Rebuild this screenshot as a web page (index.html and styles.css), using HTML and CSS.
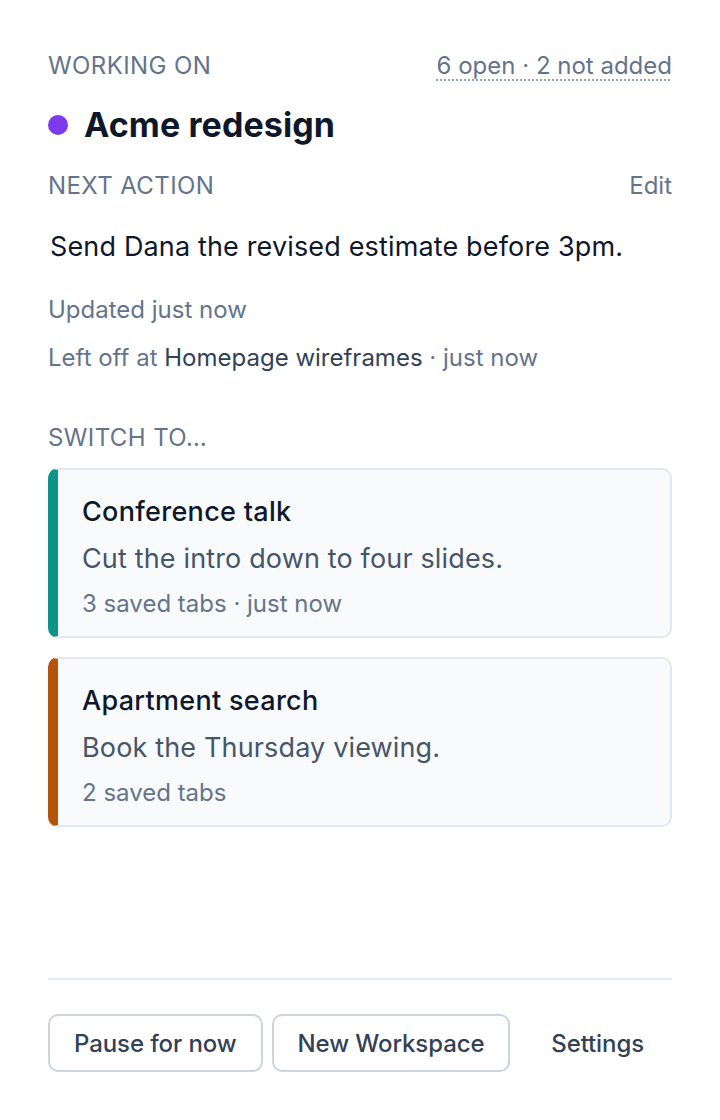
FILE: index.html
```html
<!DOCTYPE html>
<html lang="en">
<head>
    <meta charset="UTF-8">
    <meta name="viewport" content="width=device-width, initial-scale=1.0">
    <title>Workspaces</title>
    <link rel="stylesheet" href="styles.css">
</head>
<body>
    <div class="popup">
        <div class="row">
            <span class="label">Working on</span>
            <span class="tab-count">6 open · 2 not added</span>
        </div>
        <h1 class="current">
            <span class="dot"></span>
            Acme redesign
        </h1>

        <div class="row next-row">
            <span class="label">Next action</span>
            <a class="edit" href="#">Edit</a>
        </div>
        <p class="next-action">Send Dana the revised estimate before 3pm.</p>
        <p class="meta updated">Updated just now</p>
        <p class="meta left-off">Left off at <span class="page">Homepage wireframes</span> · just now</p>

        <div class="label switch-label">Switch to…</div>
        <div class="cards">
            <div class="card teal">
                <div class="card-title">Conference talk</div>
                <div class="card-action">Cut the intro down to four slides.</div>
                <div class="card-meta">3 saved tabs · just now</div>
            </div>
            <div class="card orange">
                <div class="card-title">Apartment search</div>
                <div class="card-action">Book the Thursday viewing.</div>
                <div class="card-meta">2 saved tabs</div>
            </div>
        </div>

        <div class="footer">
            <button type="button" class="btn">Pause for now</button>
            <button type="button" class="btn">New Workspace</button>
            <button type="button" class="btn plain">Settings</button>
        </div>
    </div>
</body>
</html>
```

FILE: styles.css
```css
* {
    box-sizing: border-box;
}

body {
    font-family: Inter, "Noto Sans", sans-serif;
    background-color: #FFFFFF;
    color: #0F172A;
    margin: 0;
}

.popup {
    min-height: 100vh;
    padding: 49px 48px 48px;
    display: flex;
    flex-direction: column;
}

.row {
    display: flex;
    justify-content: space-between;
    align-items: center;
    line-height: 33px;
}

.label {
    font-size: 24px;
    color: #64748B;
    text-transform: uppercase;
    letter-spacing: 0.4px;
}

.tab-count {
    font-size: 24px;
    color: #64748B;
    text-decoration: underline dotted #94A3B8;
    text-decoration-thickness: 2px;
    text-underline-offset: 5px;
}

.current {
    display: flex;
    align-items: center;
    gap: 16px;
    margin: 21px 0 0;
    font-size: 34px;
    line-height: 44px;
    font-weight: 700;
    letter-spacing: 0.1px;
}

.dot {
    width: 20px;
    height: 20px;
    border-radius: 50%;
    background: #7C3AED;
}

.next-row {
    margin-top: 22px;
}

.edit {
    font-size: 24px;
    color: #64748B;
    text-decoration: none;
}

.next-action {
    margin: 25px 0 0;
    padding-left: 2px;
    font-size: 27px;
    line-height: 39px;
    letter-spacing: 0.15px;
    color: #0F172A;
}

.meta {
    margin: 0;
    font-size: 24px;
    line-height: 33px;
    color: #64748B;
}

.updated {
    margin-top: 27px;
}

.left-off {
    margin-top: 15px;
}

.page {
    color: #334155;
}

.switch-label {
    margin-top: 47px;
    line-height: 33px;
}

.cards {
    display: flex;
    flex-direction: column;
    gap: 19px;
    margin-top: 14px;
}

.card {
    background: #F8FAFC;
    border: 2px solid #E2E8F0;
    border-left: 10px solid #0D9488;
    border-radius: 10px;
    padding: 24px 24px 16px;
}

.card.orange {
    border-left-color: #B45309;
}

.card-title {
    font-size: 27px;
    line-height: 36px;
    font-weight: 500;
    letter-spacing: 0.3px;
    color: #0F172A;
}

.card-action {
    margin-top: 11px;
    font-size: 27px;
    line-height: 36px;
    letter-spacing: 0.15px;
    color: #475569;
}

.card-meta {
    margin-top: 10px;
    font-size: 24px;
    line-height: 33px;
    color: #64748B;
}

.footer {
    margin-top: auto;
    border-top: 2px solid #E2E8F0;
    padding-top: 34px;
    display: flex;
    gap: 9px;
}

.btn {
    font-family: inherit;
    font-size: 24px;
    font-weight: 500;
    color: #334155;
    background: #FFFFFF;
    border: 2px solid #CBD5E1;
    border-radius: 10px;
    height: 58px;
    padding: 0 24px;
    letter-spacing: -0.1px;
    cursor: pointer;
}

.btn.plain {
    margin-left: auto;
    border-color: transparent;
    background: none;
    padding: 0 26px;
}
```
